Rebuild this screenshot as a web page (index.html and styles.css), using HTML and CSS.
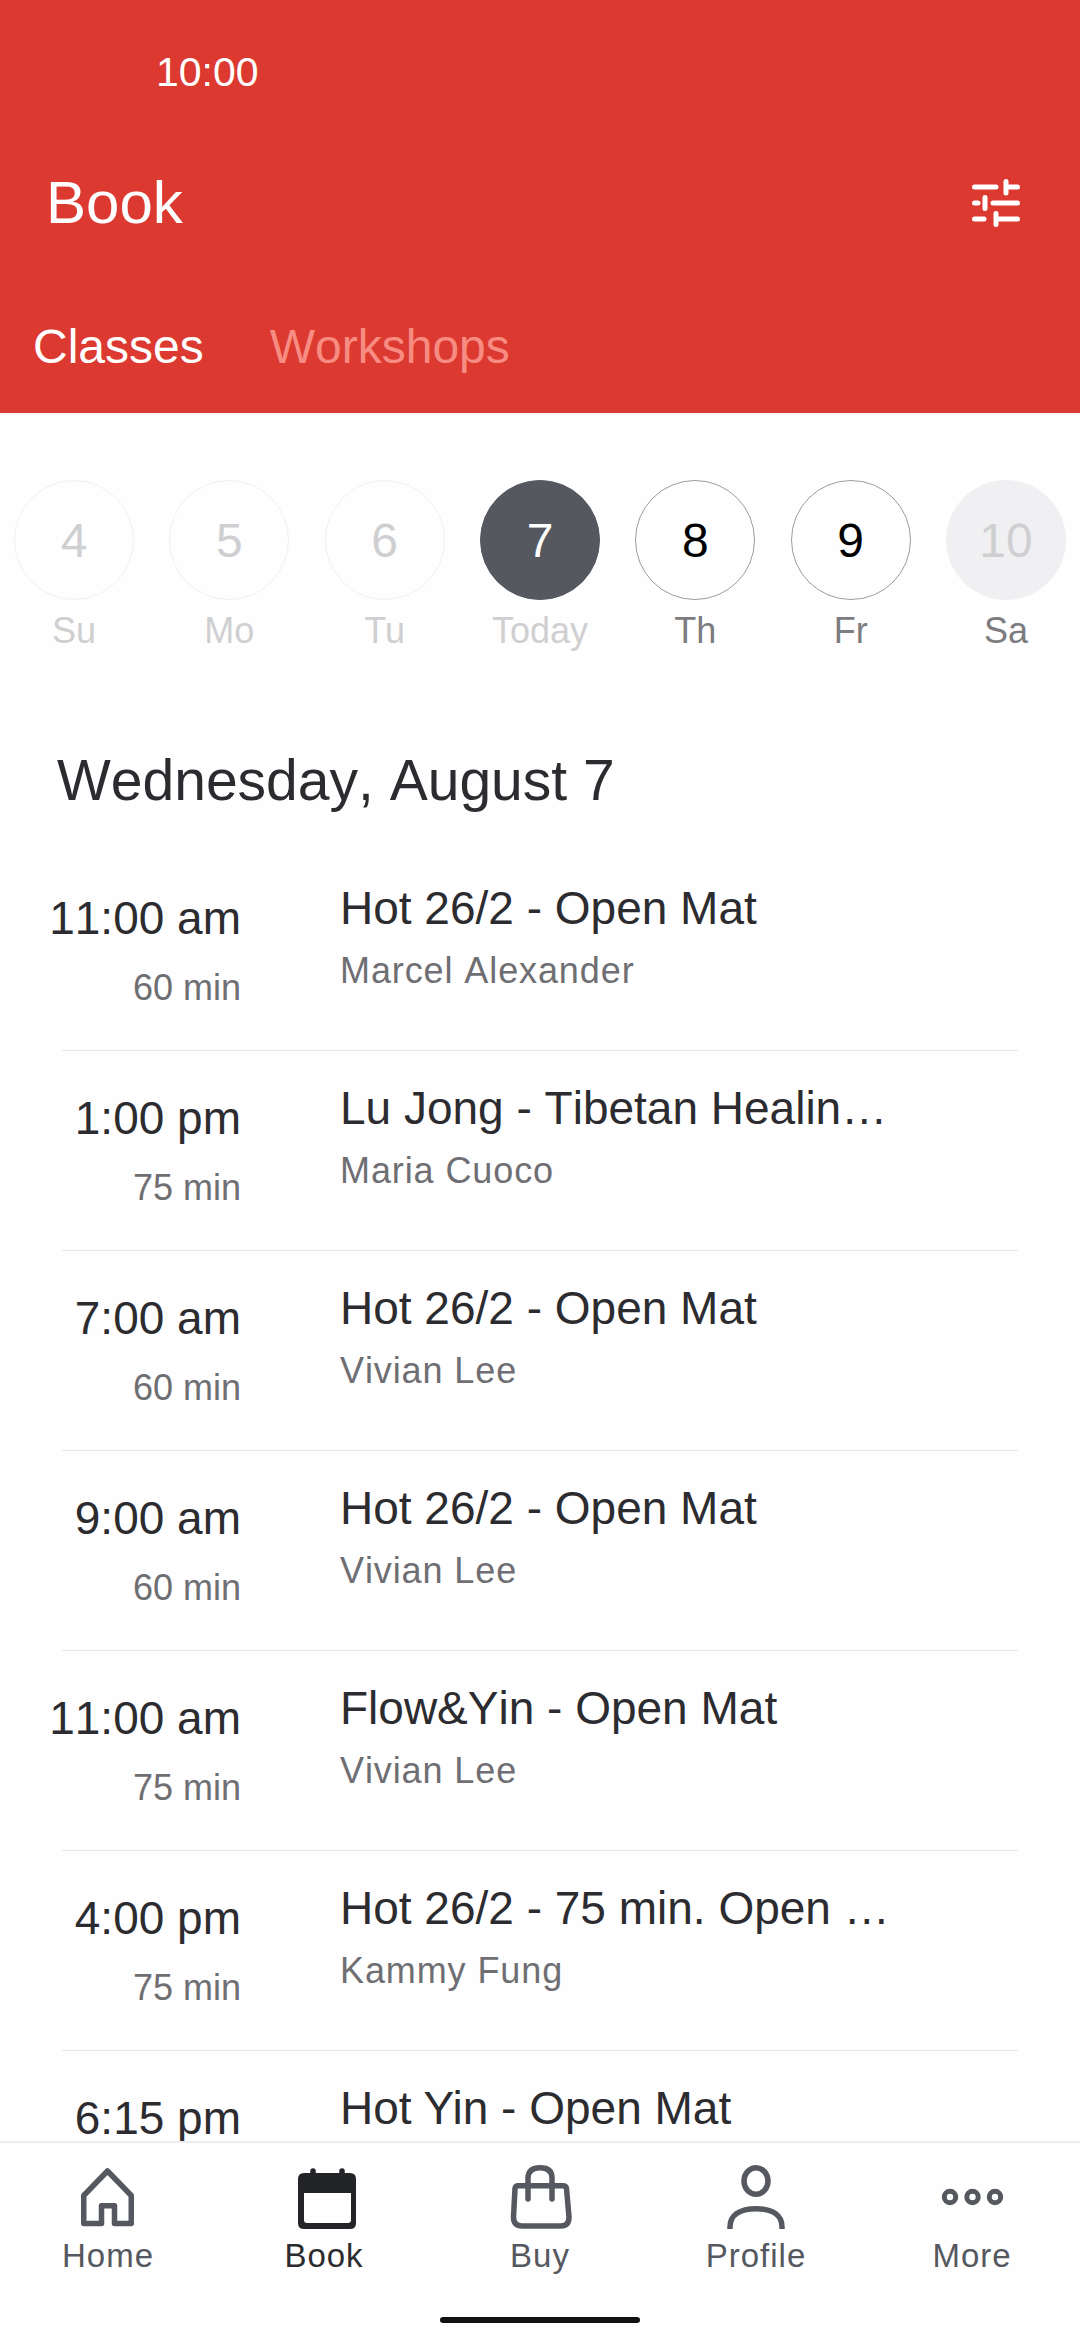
FILE: index.html
```html
<!DOCTYPE html>
<html lang="en">
<head>
<meta charset="utf-8">
<title>Book</title>
<link rel="stylesheet" href="styles.css">
</head>
<body>
<div class="app">
  <header class="header">
    <div class="status">10:00</div>
    <div class="titlebar">
      <h1 class="title">Book</h1>
      <svg class="filter" viewBox="0 0 48 48" fill="none" stroke="#fff" stroke-width="5" stroke-linecap="round">
        <path d="M2.5 8H24M34 2.5V14M34 8H45.5M2.5 24H6M13 18.500V29.500M21 24H45.500M2.500 40H12M24 34.500V45.500M24 40H45.500"/>
      </svg>
    </div>
    <nav class="tabs">
      <span class="tab tab-on">Classes</span>
      <span class="tab tab-off">Workshops</span>
    </nav>
  </header>

  <section class="dates">
    <div class="day day-past"><div class="circle">4</div><div class="dlabel">Su</div></div>
    <div class="day day-past"><div class="circle">5</div><div class="dlabel">Mo</div></div>
    <div class="day day-past"><div class="circle">6</div><div class="dlabel">Tu</div></div>
    <div class="day day-today"><div class="circle">7</div><div class="dlabel">Today</div></div>
    <div class="day day-open"><div class="circle">8</div><div class="dlabel">Th</div></div>
    <div class="day day-open"><div class="circle">9</div><div class="dlabel">Fr</div></div>
    <div class="day day-closed"><div class="circle">10</div><div class="dlabel">Sa</div></div>
  </section>

  <h2 class="heading">Wednesday, August 7</h2>

  <main class="list">
    <div class="row">
      <div class="when"><div class="time">11:00 am</div><div class="dur">60 min</div></div>
      <div class="info"><div class="cname">Hot 26/2 - Open Mat</div><div class="teacher">Marcel Alexander</div></div>
    </div>
    <div class="sep"></div>
    <div class="row">
      <div class="when"><div class="time">1:00 pm</div><div class="dur">75 min</div></div>
      <div class="info"><div class="cname">Lu Jong - Tibetan Healin…</div><div class="teacher">Maria Cuoco</div></div>
    </div>
    <div class="sep"></div>
    <div class="row">
      <div class="when"><div class="time">7:00 am</div><div class="dur">60 min</div></div>
      <div class="info"><div class="cname">Hot 26/2 - Open Mat</div><div class="teacher">Vivian Lee</div></div>
    </div>
    <div class="sep"></div>
    <div class="row">
      <div class="when"><div class="time">9:00 am</div><div class="dur">60 min</div></div>
      <div class="info"><div class="cname">Hot 26/2 - Open Mat</div><div class="teacher">Vivian Lee</div></div>
    </div>
    <div class="sep"></div>
    <div class="row">
      <div class="when"><div class="time">11:00 am</div><div class="dur">75 min</div></div>
      <div class="info"><div class="cname">Flow&amp;Yin - Open Mat</div><div class="teacher">Vivian Lee</div></div>
    </div>
    <div class="sep"></div>
    <div class="row">
      <div class="when"><div class="time">4:00 pm</div><div class="dur">75 min</div></div>
      <div class="info"><div class="cname">Hot 26/2 - 75 min. Open …</div><div class="teacher">Kammy Fung</div></div>
    </div>
    <div class="sep"></div>
    <div class="row">
      <div class="when"><div class="time">6:15 pm</div></div>
      <div class="info"><div class="cname cname-kern">Hot Yin - Open Mat</div></div>
    </div>
  </main>

  <footer class="tabbar">
    <div class="navs">
      <div class="nav">
        <svg class="nicon" viewBox="0 0 72 72" fill="none" stroke="#55585e" stroke-width="5.500" stroke-linejoin="round">
          <path d="M11.750 66.500V38.500L35.500 14L59.250 38.500V66.500H42.500V48.700H29.500V66.500Z"/>
        </svg>
        <span class="nlabel">Home</span>
      </div>
      <div class="nav nav-on">
        <svg class="nicon" viewBox="0 0 72 72">
          <path fill="#232427" d="M16 16H62Q68 16 68 22V66Q68 72 62 72H16Q10 72 10 66V22Q10 16 16 16Z"/>
          <path fill="#fefefe" d="M16 36H63V63Q63 66 60 66H19Q16 66 16 63Z"/>
          <path stroke="#232427" stroke-width="5.500" stroke-linecap="round" d="M25 14V20M54 14V20"/>
        </svg>
        <span class="nlabel">Book</span>
      </div>
      <div class="nav">
        <svg class="nicon" viewBox="0 0 72 72" fill="none" stroke="#55585e" stroke-width="5.500" stroke-linecap="round" stroke-linejoin="round">
          <path d="M14 28.700H59Q62 28.700 62.500 31.500L65 60Q65 69 57 69H18Q9.500 69 9.500 60L11 31.500Q11.500 28.700 14 28.700Z"/>
          <path d="M24 42V21Q24 10.700 36 10.700Q48 10.700 48 21V42"/>
        </svg>
        <span class="nlabel">Buy</span>
      </div>
      <div class="nav">
        <svg class="nicon" viewBox="0 0 72 72" fill="none" stroke="#55585e" stroke-width="5.500">
          <ellipse cx="36" cy="24" rx="12" ry="13.250"/>
          <path d="M10 72V70C10 58 20 51.700 36 51.700C52 51.700 62 58 62 70V72"/>
        </svg>
        <span class="nlabel">Profile</span>
      </div>
      <div class="nav">
        <svg class="nicon" viewBox="0 0 72 72" fill="none" stroke="#55585e" stroke-width="5">
          <circle cx="14" cy="40" r="5.700"/>
          <circle cx="36.500" cy="40" r="5.700"/>
          <circle cx="59" cy="40" r="5.700"/>
        </svg>
        <span class="nlabel">More</span>
      </div>
    </div>
    <div class="homebar"></div>
  </footer>
</div>
</body>
</html>
```
FILE: styles.css
```css
* { box-sizing: border-box; margin: 0; padding: 0; }
html, body { width: 1080px; height: 2340px; background: #fefefe; overflow: hidden; }
body { font-family: "Liberation Sans", Arial, sans-serif; color: #2c2c30; font-kerning: none; }

.app { width: 1080px; height: 2340px; display: flex; flex-direction: column; background: #fefefe; }

.header { height: 413px; flex: none; background: #dc3a30; color: #fff; display: flex; flex-direction: column; }
.status { height: 144px; padding-left: 156px; font-size: 41px; line-height: 144px; }
.titlebar { height: 117px; display: flex; align-items: center; justify-content: space-between; padding: 0 60px 0 46px; }
.title { font-size: 60px; line-height: 116px; font-weight: 400; }
.filter { width: 48px; height: 48px; flex: none; }
.tabs { display: flex; gap: 66px; padding: 58px 0 0 33px; }
.tab { font-size: 48px; line-height: 56px; }
.tab-off { color: #f78c82; }

.dates { flex: none; display: flex; justify-content: space-between; padding: 67px 14px 0; }
.day { width: 120px; display: flex; flex-direction: column; align-items: center; }
.circle { width: 120px; height: 120px; border-radius: 50%; border: 1px solid transparent; font-size: 48px; display: flex; align-items: center; justify-content: center; }
.dlabel { margin-top: 11px; font-size: 36px; line-height: 40px; font-kerning: normal; }
.day-past .circle { border-color: #f1f1f3; color: #cfcfd2; }
.day-past .dlabel { color: #cfcfd2; }
.day-today .circle { background: #55585f; border-color: #55585f; color: #fff; }
.day-today .dlabel { color: #cfcfd2; }
.day-open .circle { border-color: #9c9ca0; color: #000; }
.day-open .dlabel { color: #7c7c81; }
.day-closed .circle { background: #f0eff1; border-color: #f0eff1; color: #cfcfd2; }
.day-closed .dlabel { color: #7c7c81; }

.heading { flex: none; margin: 97px 0 39px; padding-left: 57px; font-size: 57px; line-height: 64px; font-weight: 400; }

.list { flex: 1; min-height: 0; overflow: hidden; }
.row { height: 199px; display: flex; }
.sep { height: 1px; margin: 0 62px; background: #e6e6e8; }
.when { width: 241px; flex: none; padding-top: 39px; text-align: right; }
.time { font-size: 46px; line-height: 56px; }
.dur { margin-top: 20px; font-size: 36px; line-height: 44px; color: #6e6e73; }
.info { margin-left: 99px; padding-top: 29px; min-width: 0; }
.cname { font-size: 46px; line-height: 56px; white-space: nowrap; }
.cname-kern { font-kerning: normal; }
.teacher { margin-top: 13px; font-size: 36px; line-height: 44px; letter-spacing: 0.9px; color: #6e6e73; }

.tabbar { flex: none; height: 199px; border-top: 2px solid #ececee; background: #fefefe; display: flex; flex-direction: column; }
.navs { display: flex; padding-top: 14px; }
.nav { flex: 1; display: flex; flex-direction: column; align-items: center; color: #55585e; }
.nicon { width: 72px; height: 72px; display: block; }
.nlabel { margin-top: 7px; font-size: 33px; line-height: 40px; letter-spacing: 1px; }
.nav-on { color: #2c2c30; }
.homebar { width: 200px; height: 6px; border-radius: 3px; background: #111114; margin: 41px auto 0; }
```
